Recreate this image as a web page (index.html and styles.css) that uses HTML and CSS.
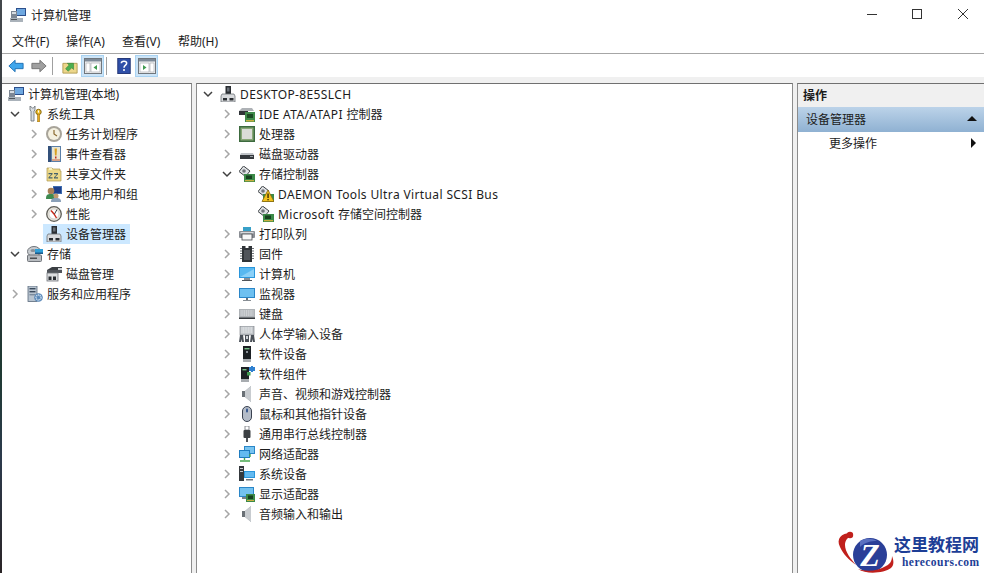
FILE: index.html
```html
<!DOCTYPE html>
<html lang="zh-CN">
<head>
    <meta charset="UTF-8">
    <meta name="viewport" content="width=device-width, initial-scale=1.0">
    <title>计算机管理</title>
    <link rel="stylesheet" href="styles.css">
</head>
<body>
    <svg class="sprite" xmlns="http://www.w3.org/2000/svg">
        <symbol id="chev-r" viewBox="0 0 10 10"><path d="M3 1l4 4-4 4" fill="none" stroke="#a6a6a6" stroke-width="1.5"/></symbol>
        <symbol id="chev-d" viewBox="0 0 10 10"><path d="M1 3l4 4 4-4" fill="none" stroke="#404040" stroke-width="1.5"/></symbol>

        <symbol id="mgmt" viewBox="0 0 16 16"><rect x="6" y="1" width="10" height="8" fill="#2c4f8c"/><rect x="7" y="2" width="8" height="6" fill="#6fa8e0"/><rect x="1" y="4" width="6" height="8" fill="#7d8794"/><rect x="2" y="5" width="4" height="2" fill="#d8dde2"/><rect x="0" y="11" width="13" height="4" fill="#aab2ba"/><rect x="1" y="12" width="6" height="1" fill="#50565c"/></symbol>
        <symbol id="tools" viewBox="0 0 16 16"><path d="M3 0v4l1 1v10h3V5l1-1V0L6.500 2h-1z" fill="#d8dde2" stroke="#666c72" stroke-width=".8"/><circle cx="11.500" cy="6" r="2.700" fill="#f0c030" stroke="#8a6a10"/><rect x="10.500" y="8" width="2.200" height="8" fill="#e8a820" stroke="#8a6a10" stroke-width=".5"/><rect x="11" y="4.500" width="1" height="2" fill="#fff"/></symbol>
        <symbol id="clock" viewBox="0 0 16 16"><circle cx="8" cy="8" r="8" fill="#a8a49a"/><circle cx="8" cy="8" r="6" fill="#f4f0e0"/><path d="M8 4v4l3 2" fill="none" stroke="#8a6a30" stroke-width="1.200"/></symbol>
        <symbol id="event" viewBox="0 0 16 16"><rect x="2" y="0" width="13" height="16" fill="#5a7fa8"/><rect x="2" y="0" width="3" height="16" fill="#33507a"/><rect x="6" y="1" width="8" height="14" fill="#e8e4d0"/><path d="M8.500 2.500h2.500l-.5 7H9z" fill="#d8a020"/><rect x="9" y="10.500" width="1.500" height="2" fill="#c03020"/><path d="M6 14h8" stroke="#c86040"/></symbol>
        <symbol id="share" viewBox="0 0 16 16"><path d="M1 2h5l1 1h7v2h1v10H1z" fill="#ecd888" stroke="#b09a50" stroke-width=".7"/><path d="M3 2h3v2H3z" fill="#f8f0c0"/><path d="M2.500 7h4v1.200l-3 3h3v1.300h-4v-1.200l3-3h-3zM8 7h4v1.200l-3 3h3v1.300H8v-1.200l3-3H8z" fill="#45606a"/></symbol>
        <symbol id="users" viewBox="0 0 16 16"><rect x="7" y="0" width="9" height="8" fill="#3d6cb0"/><rect x="8" y="1" width="7" height="6" fill="#1d3f8a"/><circle cx="5" cy="5" r="3.300" fill="#a88058"/><path d="M0 13c0-4 1-5 5-5s4 1 4 5z" fill="#3f8a50"/><circle cx="10" cy="10" r="2.500" fill="#c09a70"/><path d="M5 16c0-3 1-4 5-4s5 1 5 4z" fill="#8aa0b8"/></symbol>
        <symbol id="perf" viewBox="0 0 16 16"><circle cx="8" cy="8" r="7.300" fill="#e8e4dc" stroke="#5e5e58" stroke-width="1.300"/><circle cx="8" cy="8" r="5" fill="#fff" stroke="#c0c0b8" stroke-width=".6"/><path d="M5 4.500l3 3.500 2.500 4" stroke="#c82818" stroke-width="1.400" fill="none"/><path d="M11 3.500L8.500 8" stroke="#404040"/></symbol>
        <symbol id="dev" viewBox="0 0 16 16"><rect x="5.500" y="0" width="5.500" height="9" fill="#2a2e33"/><rect x="7" y="1.500" width="2.500" height="4" fill="#6a7078"/><path d="M2 8h12l1 2v6H1v-6z" fill="#d8dadd" stroke="#70747a" stroke-width=".8"/><rect x="3" y="12" width="4" height="2.500" fill="#2a2e33"/><rect x="9.500" y="12" width="4" height="2.500" fill="#2a2e33"/></symbol>
        <symbol id="storage" viewBox="0 0 16 16"><ellipse cx="7" cy="5.500" rx="6.500" ry="5" fill="#c8ccd0" stroke="#70747a"/><ellipse cx="6" cy="4.500" rx="2.500" ry="1.500" fill="#889098"/><rect x="8" y="3" width="8" height="4" fill="#2f9fd8"/><rect x="8" y="6.500" width="8" height="1.500" fill="#1a5a8a"/><rect x=".5" y="9" width="14" height="6.500" rx="1" fill="#b8bcc0" stroke="#70747a"/><rect x="3" y="11.500" width="7" height="1.500" fill="#4a4e52"/></symbol>
        <symbol id="disk" viewBox="0 0 16 16"><path d="M1 4l5-3h10v3z" fill="#3a3e42"/><rect x="1" y="4" width="15" height="3" fill="#50545a"/><rect x="12" y="2" width="4" height="2" fill="#d0d4d8"/><rect x="1" y="7" width="11" height="8" fill="#dcdee0" stroke="#70747a" stroke-width=".8"/><rect x="2.500" y="10.500" width="3" height="3.500" fill="#2a2e33"/><rect x="7" y="10.500" width="3" height="3.500" fill="#2a2e33"/></symbol>
        <symbol id="services" viewBox="0 0 16 16"><rect x="1" y="0" width="9" height="15.500" fill="#b8c4d0" stroke="#5a6a7c" stroke-width=".8"/><rect x="2.500" y="2" width="6" height="1.400" fill="#3a4a5c"/><rect x="2.500" y="5" width="6" height="1.400" fill="#3a4a5c"/><rect x="2.500" y="8" width="6" height="1.400" fill="#7a8a9c"/><circle cx="11.500" cy="11.500" r="4.300" fill="#5a88b8"/><circle cx="11.500" cy="11.500" r="2.500" fill="none" stroke="#cfe0f0" stroke-width="1.400" stroke-dasharray="1.200 .6"/></symbol>

        <symbol id="ide" viewBox="0 0 16 16"><path d="M0 5l3-3h10l2 3z" fill="#aeb2b6"/><rect x="0" y="5" width="9" height="4" fill="#303438"/><rect x="6" y="6" width="10" height="10" fill="#3f8a4a"/><rect x="8" y="8" width="6" height="4" fill="#1c4a24"/><rect x="7" y="14" width="8" height="1.500" fill="#c8b040"/></symbol>
        <symbol id="cpu" viewBox="0 0 16 16"><rect x="0" y="0" width="16" height="16" fill="#3c6a3e"/><rect x="1.500" y="1.500" width="13" height="13" fill="#8aa878"/><rect x="3" y="3" width="10" height="10" fill="#dcdcd8"/></symbol>
        <symbol id="hdd" viewBox="0 0 16 16"><path d="M1 9l1-2h12l1 2z" fill="#c0c4c8"/><rect x="1" y="9" width="14" height="4" fill="#34383c"/><rect x="11" y="10" width="3" height="1" fill="#9aa0a6"/></symbol>
        <symbol id="store" viewBox="0 0 16 16"><path d="M0 5.500L4.500 0 11 5l-4.500 5.500z" fill="#dfe2e5" stroke="#3e4246"/><circle cx="5" cy="5" r="1.800" fill="#70747a"/><rect x="5" y="8" width="11" height="8" fill="#3c8a48"/><rect x="7" y="9.500" width="6" height="3.500" fill="#17401f"/><rect x="6" y="14" width="9" height="1.300" fill="#c8b040"/></symbol>
        <symbol id="warn" viewBox="0 0 16 16"><path d="M10 4l6 11.500H4z" fill="#f2c21c" stroke="#8a6a10" stroke-width=".8"/><rect x="9.400" y="7.500" width="1.300" height="4.500" fill="#332400"/><rect x="9.400" y="13" width="1.300" height="1.300" fill="#332400"/></symbol>
        <symbol id="printer" viewBox="0 0 16 16"><rect x="4" y="1" width="8" height="4" fill="#37a0c8"/><rect x="0" y="5" width="16" height="7" rx="1" fill="#8a8e94"/><rect x="1.500" y="6" width="13" height="1.500" fill="#d8dadd"/><rect x="3" y="8" width="10" height="6" fill="#f8f8f8" stroke="#44484c" stroke-width=".8"/></symbol>
        <symbol id="chip" viewBox="0 0 16 16"><rect x="3" y="0" width="10" height="16" fill="#303438"/><path d="M6.500 0h3v2h-3z" fill="#fff"/><path d="M1 2.500h2M1 5h2M1 7.500h2M1 10h2M1 12.500h2M13 2.500h2M13 5h2M13 7.500h2M13 10h2M13 12.500h2" stroke="#70747a" stroke-width="1.200"/><rect x="5" y="4" width="6" height="10" fill="#50545a"/></symbol>
        <symbol id="pc" viewBox="0 0 16 16"><rect x="0" y="1" width="16" height="11" fill="#2a96dc"/><path d="M1 2h14v9H1z" fill="#58b8f0"/><path d="M1 11L15 3v8z" fill="#8ad0f8"/><rect x="5" y="12" width="6" height="2" fill="#8a9098"/><rect x="3" y="14" width="10" height="1" fill="#50555a"/></symbol>
        <symbol id="monitor" viewBox="0 0 16 16"><rect x="0" y="2" width="16" height="10" fill="#2a86c8"/><rect x="1" y="3" width="14" height="8" fill="#6ec0f0"/><rect x="7" y="12" width="2" height="2" fill="#6a7078"/><rect x="4" y="14" width="8" height="1" fill="#888e94"/></symbol>
        <symbol id="keyboard" viewBox="0 0 16 16"><rect x="0" y="3" width="16" height="10" fill="#aeb2b6"/><path d="M1.500 5h13M1.500 7h13M1.500 9h13" stroke="#eef0f2" stroke-dasharray="1.200 .6"/><rect x="0" y="11.500" width="16" height="1.500" fill="#34383c"/></symbol>
        <symbol id="hid" viewBox="0 0 16 16"><rect x="1" y="0" width="14" height="9" fill="#c4c8cc" stroke="#70747a" stroke-width=".6"/><path d="M2.500 2h11M2.500 4h11M2.500 6h11" stroke="#f0f2f4" stroke-dasharray="1 .6"/><path d="M0 16l1-7h3l1 7H3l-.5-3-.5 3zM6 16V9h4v7zM11 16l1-7h3l1 7h-2l-.5-3-.5 3z" fill="#4a5058"/><rect x="7" y="10" width="2" height="3" fill="#d0d4d8"/></symbol>
        <symbol id="softdev" viewBox="0 0 16 16"><rect x="4" y="0" width="8" height="13" fill="#1c2024"/><rect x="5.500" y="2" width="5" height="1.400" fill="#78c088"/><rect x="7" y="5" width="2" height="2" fill="#8a9098"/><rect x="4" y="13" width="8" height="3" fill="#a8acb0"/></symbol>
        <symbol id="softcomp" viewBox="0 0 16 16"><rect x="2" y="1" width="8" height="12" fill="#1c2024"/><rect x="3.500" y="3" width="4" height="1.400" fill="#78c088"/><rect x="2" y="13" width="8" height="3" fill="#a8acb0"/><path d="M10 1h2V0h2v1h2v4h-2v1h-2V5h-2z" fill="#2f80d0"/><rect x="8" y="6" width="3.500" height="3.500" fill="#3f9a50"/></symbol>
        <symbol id="speaker" viewBox="0 0 16 16"><path d="M3 5h3l6-5v16l-6-5H3z" fill="#9aa0a6"/><path d="M6 5l6-5v16l-6-5z" fill="#c8ccd0"/><rect x="3" y="5" width="3" height="6" fill="#6a7076"/></symbol>
        <symbol id="mouse" viewBox="0 0 16 16"><rect x="3.500" y="0.500" width="9" height="15" rx="4.500" fill="#b4bcc8" stroke="#3a4250"/><rect x="7" y="2.500" width="2" height="4" rx="1" fill="#3a5a90"/></symbol>
        <symbol id="usb" viewBox="0 0 16 16"><rect x="6" y="0" width="4" height="4" fill="#fff" stroke="#70747a" stroke-width=".8"/><rect x="4.500" y="4" width="7" height="8" rx="1" fill="#3c4044"/><rect x="7" y="12" width="2" height="4" fill="#50545a"/></symbol>
        <symbol id="network" viewBox="0 0 16 16"><rect x="5" y="0" width="11" height="8" fill="#2a86c8"/><rect x="6" y="1" width="9" height="6" fill="#78c4f0"/><rect x="0" y="4" width="11" height="8" fill="#1f7cc0"/><rect x="1" y="5" width="9" height="6" fill="#64baf0"/><path d="M5.500 12v2M1 15h10M11 8v3" stroke="#48a850" stroke-width="1.400"/></symbol>
        <symbol id="system" viewBox="0 0 16 16"><rect x="0" y="0" width="5" height="15" fill="#34383c"/><rect x="1" y="2" width="3" height="1" fill="#c8ccd0"/><rect x="1" y="5" width="3" height="1" fill="#c8ccd0"/><rect x="5" y="5" width="11" height="7" fill="#2a96dc"/><rect x="6" y="6" width="9" height="5" fill="#64baf0"/><rect x="7" y="13" width="7" height="1.500" fill="#70767c"/></symbol>
        <symbol id="display" viewBox="0 0 16 16"><rect x="0" y="1" width="15" height="10" fill="#2a86c8"/><rect x="1" y="2" width="13" height="8" fill="#74c2f0"/><rect x="3" y="11" width="4" height="2" fill="#7a8086"/><rect x="7" y="8" width="9" height="8" fill="#3c8a48"/><rect x="9" y="9.500" width="5" height="3.500" fill="#17401f"/><rect x="8" y="14" width="7" height="1" fill="#c8b040"/></symbol>
    </svg>

    <div class="window">
        <header class="titlebar">
            <svg class="ico"><use href="#mgmt"/></svg>
            <span class="title">计算机管理</span>
            <div class="winbtns">
                <svg class="winbtn" viewBox="0 0 46 31"><path d="M21 14.500h10" stroke="#333"/></svg>
                <svg class="winbtn" viewBox="0 0 46 31"><rect x="20.500" y="9.500" width="9" height="9" fill="none" stroke="#333"/></svg>
                <svg class="winbtn" viewBox="0 0 46 31"><path d="M20 9l10 10M30 9L20 19" stroke="#333" fill="none"/></svg>
            </div>
        </header>

        <nav class="menubar">
            <span class="menu">文件(F)</span>
            <span class="menu">操作(A)</span>
            <span class="menu">查看(V)</span>
            <span class="menu">帮助(H)</span>
        </nav>

        <div class="toolbar">
            <span class="tool"><svg viewBox="0 0 18 14"><path d="M8 0.500v3.500h9v6H8v3.500L1 7z" fill="#3fa6ec" stroke="#1c6cb0"/></svg></span>
            <span class="tool"><svg viewBox="0 0 18 14"><path d="M10 0.500v3.500H1v6h9v3.500L17 7z" fill="#a0a0a0" stroke="#707070"/></svg></span>
            <i class="sep"></i>
            <span class="tool"><svg viewBox="0 0 18 18"><path d="M1 6h16v11H1z" fill="#ecd68a" stroke="#b09a50"/><path d="M4 12l4-4-2-2h7v7l-2-2-4 4z" fill="#4caf50" stroke="#2e7d32" stroke-width=".6"/></svg></span>
            <span class="tool on"><svg viewBox="0 0 18 18"><rect x=".5" y="1.500" width="17" height="15" fill="#f4f4f4" stroke="#70767c"/><rect x="1" y="2" width="16" height="2.500" fill="#7d8a98"/><rect x="2" y="6" width="4" height="9" fill="#fff" stroke="#a0a6ac" stroke-width=".6"/><rect x="7" y="6" width="9" height="9" fill="#fff" stroke="#a0a6ac" stroke-width=".6"/><path d="M13 8v5l-3.500-2.500z" fill="#3f9a50"/></svg></span>
            <i class="sep"></i>
            <span class="tool"><svg viewBox="0 0 18 18"><rect x="2" y="0.500" width="14" height="17" fill="#2f4fa8" stroke="#1c2f70"/><path d="M6 6c0-3 6-3 6 0 0 2-3 2-3 5M9 12.500v2" fill="none" stroke="#fff" stroke-width="1.700"/></svg></span>
            <span class="tool on"><svg viewBox="0 0 18 18"><rect x=".5" y="1.500" width="17" height="15" fill="#f4f4f4" stroke="#70767c"/><rect x="1" y="2" width="16" height="2.500" fill="#7d8a98"/><rect x="2" y="6" width="9" height="9" fill="#fff" stroke="#a0a6ac" stroke-width=".6"/><rect x="12" y="6" width="4" height="9" fill="#fff" stroke="#a0a6ac" stroke-width=".6"/><path d="M5 8v5l3.500-2.500z" fill="#3f9a50"/></svg></span>
        </div>

        <main class="panes">
            <section class="pane nav-pane">
                <div class="row d0"><span class="item"><svg class="ico"><use href="#mgmt"/></svg>计算机管理(本地)</span></div>
                <div class="row d1"><svg class="chev"><use href="#chev-d"/></svg><span class="item"><svg class="ico"><use href="#tools"/></svg>系统工具</span></div>
                <div class="row d2"><svg class="chev"><use href="#chev-r"/></svg><span class="item"><svg class="ico"><use href="#clock"/></svg>任务计划程序</span></div>
                <div class="row d2"><svg class="chev"><use href="#chev-r"/></svg><span class="item"><svg class="ico"><use href="#event"/></svg>事件查看器</span></div>
                <div class="row d2"><svg class="chev"><use href="#chev-r"/></svg><span class="item"><svg class="ico"><use href="#share"/></svg>共享文件夹</span></div>
                <div class="row d2"><svg class="chev"><use href="#chev-r"/></svg><span class="item"><svg class="ico"><use href="#users"/></svg>本地用户和组</span></div>
                <div class="row d2"><svg class="chev"><use href="#chev-r"/></svg><span class="item"><svg class="ico"><use href="#perf"/></svg>性能</span></div>
                <div class="row d2"><span class="chev"></span><span class="item selected"><svg class="ico"><use href="#dev"/></svg>设备管理器</span></div>
                <div class="row d1"><svg class="chev"><use href="#chev-d"/></svg><span class="item"><svg class="ico"><use href="#storage"/></svg>存储</span></div>
                <div class="row d2"><span class="chev"></span><span class="item"><svg class="ico"><use href="#disk"/></svg>磁盘管理</span></div>
                <div class="row d1"><svg class="chev"><use href="#chev-r"/></svg><span class="item"><svg class="ico"><use href="#services"/></svg>服务和应用程序</span></div>
            </section>

            <section class="pane dev-pane">
                <div class="row d1"><svg class="chev"><use href="#chev-d"/></svg><span class="item"><svg class="ico"><use href="#dev"/></svg><span class="latin">DESKTOP-8E5SLCH</span></span></div>
                <div class="row d2"><svg class="chev"><use href="#chev-r"/></svg><span class="item"><svg class="ico"><use href="#ide"/></svg><span class="latin">IDE ATA/ATAPI&nbsp;</span>控制器</span></div>
                <div class="row d2"><svg class="chev"><use href="#chev-r"/></svg><span class="item"><svg class="ico"><use href="#cpu"/></svg>处理器</span></div>
                <div class="row d2"><svg class="chev"><use href="#chev-r"/></svg><span class="item"><svg class="ico"><use href="#hdd"/></svg>磁盘驱动器</span></div>
                <div class="row d2"><svg class="chev"><use href="#chev-d"/></svg><span class="item"><svg class="ico"><use href="#store"/></svg>存储控制器</span></div>
                <div class="row d3"><span class="chev"></span><span class="item"><svg class="ico"><use href="#store"/><use href="#warn"/></svg><span class="latin">DAEMON Tools Ultra Virtual SCSI Bus</span></span></div>
                <div class="row d3"><span class="chev"></span><span class="item"><svg class="ico"><use href="#store"/></svg><span class="latin">Microsoft&nbsp;</span>存储空间控制器</span></div>
                <div class="row d2"><svg class="chev"><use href="#chev-r"/></svg><span class="item"><svg class="ico"><use href="#printer"/></svg>打印队列</span></div>
                <div class="row d2"><svg class="chev"><use href="#chev-r"/></svg><span class="item"><svg class="ico"><use href="#chip"/></svg>固件</span></div>
                <div class="row d2"><svg class="chev"><use href="#chev-r"/></svg><span class="item"><svg class="ico"><use href="#pc"/></svg>计算机</span></div>
                <div class="row d2"><svg class="chev"><use href="#chev-r"/></svg><span class="item"><svg class="ico"><use href="#monitor"/></svg>监视器</span></div>
                <div class="row d2"><svg class="chev"><use href="#chev-r"/></svg><span class="item"><svg class="ico"><use href="#keyboard"/></svg>键盘</span></div>
                <div class="row d2"><svg class="chev"><use href="#chev-r"/></svg><span class="item"><svg class="ico"><use href="#hid"/></svg>人体学输入设备</span></div>
                <div class="row d2"><svg class="chev"><use href="#chev-r"/></svg><span class="item"><svg class="ico"><use href="#softdev"/></svg>软件设备</span></div>
                <div class="row d2"><svg class="chev"><use href="#chev-r"/></svg><span class="item"><svg class="ico"><use href="#softcomp"/></svg>软件组件</span></div>
                <div class="row d2"><svg class="chev"><use href="#chev-r"/></svg><span class="item"><svg class="ico"><use href="#speaker"/></svg>声音、视频和游戏控制器</span></div>
                <div class="row d2"><svg class="chev"><use href="#chev-r"/></svg><span class="item"><svg class="ico"><use href="#mouse"/></svg>鼠标和其他指针设备</span></div>
                <div class="row d2"><svg class="chev"><use href="#chev-r"/></svg><span class="item"><svg class="ico"><use href="#usb"/></svg>通用串行总线控制器</span></div>
                <div class="row d2"><svg class="chev"><use href="#chev-r"/></svg><span class="item"><svg class="ico"><use href="#network"/></svg>网络适配器</span></div>
                <div class="row d2"><svg class="chev"><use href="#chev-r"/></svg><span class="item"><svg class="ico"><use href="#system"/></svg>系统设备</span></div>
                <div class="row d2"><svg class="chev"><use href="#chev-r"/></svg><span class="item"><svg class="ico"><use href="#display"/></svg>显示适配器</span></div>
                <div class="row d2"><svg class="chev"><use href="#chev-r"/></svg><span class="item"><svg class="ico"><use href="#speaker"/></svg>音频输入和输出</span></div>
            </section>

            <aside class="pane action-pane">
                <div class="action-head">操作</div>
                <div class="action-group"><span>设备管理器</span><i class="arrow-up"></i></div>
                <div class="action-item"><span>更多操作</span><i class="arrow-right"></i></div>
            </aside>
        </main>
    </div>

    <div class="watermark">
        <svg class="wm-logo" viewBox="0 0 60 45">
            <path d="M15 5C5 5 0 11 4 19c3 7 9 13 16 18-5-6-11-13-11-20 0-5 3-8 7-9z" fill="#c0201c"/>
            <circle cx="14" cy="7" r="3.200" fill="#c0201c"/>
            <circle cx="34" cy="27" r="17" fill="#2a3f98"/>
            <path d="M24 13c5-3 12-3 17 0-6 0-12 1-17 6z" fill="#5a70c0"/>
            <path d="M22 41c9 6 26 4 33-1 3-3 3-7 1-12 0 5-2 8-6 10-8 5-19 6-28 3z" fill="#c0201c"/>
            <text x="34" y="38" class="wm-z">Z</text>
        </svg>
        <div class="wm-text">
            <div class="wm-cn">这里教程网</div>
            <div class="wm-en">herecours.com</div>
        </div>
    </div>
</body>
</html>
```

FILE: styles.css
```css
* {
    box-sizing: border-box;
}
html, body {
    margin: 0;
    height: 100%;
    overflow: hidden;
}
body {
    font-family: "Noto Sans", "Noto Sans CJK SC", sans-serif;
    font-size: 12px;
    color: #1c1c1c;
    background-color: #fff;
    position: relative;
}
.sprite {
    position: absolute;
    width: 0;
    height: 0;
}
.window {
    height: 573px;
    display: flex;
    flex-direction: column;
    border-left: 2px solid #27383a;
    border-image: linear-gradient(#44484c, #2a3036 40%, #1f3a33 65%, #2c3a4c 80%, #2a2426) 1;
}
.latin {
    letter-spacing: .37px;
    white-space: pre;
}

/* barra de titulo */
.titlebar {
    height: 31px;
    display: flex;
    align-items: center;
    padding-left: 8px;
    flex: none;
}
.titlebar .ico {
    margin-bottom: 2px;
}
.title {
    margin-left: 1px;
    padding-bottom: 2px;
}
.winbtns {
    margin-left: auto;
    display: flex;
}
.winbtn {
    width: 46px;
    height: 31px;
}

.menubar {
    height: 23px;
    flex: none;
    display: flex;
    align-items: center;
    padding: 0 0 3px 10px;
    border-bottom: 1px solid #a6a6a6;
}
.menu {
    width: 56px;
}
.menu:first-child {
    width: 54px;
}
.toolbar {
    height: 23px;
    flex: none;
    display: flex;
    align-items: center;
    padding-left: 2px;
}
.tool {
    width: 23px;
    height: 22px;
    display: flex;
    align-items: center;
    justify-content: center;
}
.tool svg {
    width: 16px;
    height: 16px;
}
.tool.on svg {
    width: 18px;
    height: 18px;
}
.tool.on {
    background-color: #cce4f7;
    border: 1px solid #a9d3f2;
}
.sep {
    width: 1px;
    height: 18px;
    margin: 0 5px 0 2px;
    background-color: #a0a0a0;
}

.panes {
    flex: 1;
    display: flex;
    gap: 4px;
    padding-top: 6px;
    background-color: #f0f0f0;
    min-height: 0;
}
.pane {
    background-color: #fff;
    border-top: 1px solid #707070;
    border-left: 1px solid #8c8c8c;
}
.nav-pane {
    width: 190px;
    border-left: none;
    border-right: 1px solid #8c8c8c;
}
.dev-pane {
    width: 597px;
    border-right: 1px solid #8c8c8c;
}
.action-pane {
    flex: 1;
}

/* arbol */
.row {
    height: 20px;
    display: flex;
    align-items: center;
    white-space: nowrap;
}
.d0 { padding-left: 3px; }
.d1 { padding-left: 6px; }
.d2 { padding-left: 25px; }
.d3 { padding-left: 44px; }
.dev-pane .d1 { padding-left: 4px; }
.dev-pane .d2 { padding-left: 23px; }
.dev-pane .d3 { padding-left: 42px; }
.chev {
    width: 16px;
    height: 10px;
    flex: none;
    margin: 0 1px 0 -1px;
}
.item {
    height: 20px;
    display: flex;
    align-items: center;
    padding: 0 3px;
}
.item.selected {
    background-color: #cce8ff;
    padding-right: 4px;
}
.ico {
    width: 16px;
    height: 16px;
    flex: none;
    margin-right: 4px;
}

/* panel de acciones */
.action-head {
    height: 23px;
    line-height: 23px;
    padding-left: 5px;
    background-color: #f0f0f0;
    font-weight: 700;
}
.action-group {
    height: 25px;
    display: flex;
    align-items: center;
    justify-content: space-between;
    padding: 0 7px 2px 8px;
    background: linear-gradient(#bcd3e9, #8fb1d2);
}
.action-item {
    height: 24px;
    display: flex;
    align-items: center;
    justify-content: space-between;
    padding: 0 8px 2px 31px;
}
.arrow-up {
    border-left: 5px solid transparent;
    border-right: 5px solid transparent;
    border-bottom: 5px solid #111;
}
.arrow-right {
    border-top: 5px solid transparent;
    border-bottom: 5px solid transparent;
    border-left: 5px solid #111;
}

/* marca de agua */
.watermark {
    position: absolute;
    right: 0;
    bottom: 0;
    width: 148px;
    height: 45px;
    display: flex;
    background-color: #fff;
}
.wm-logo {
    width: 60px;
    height: 45px;
    flex: none;
}
.wm-z {
    font-family: "Liberation Serif", serif;
    font-weight: 700;
    font-style: italic;
    font-size: 32px;
    fill: #fff;
    text-anchor: middle;
}
.wm-text {
    margin-left: -2px;
    padding-top: 3px;
    color: #1d3e96;
    font-weight: 700;
    white-space: nowrap;
}
.wm-cn {
    font-family: "Noto Sans CJK SC", sans-serif;
    font-size: 17px;
    line-height: 25px;
}
.wm-en {
    font-family: "Liberation Serif", serif;
    font-size: 11.5px;
    line-height: 13px;
    padding-left: 8px;
    letter-spacing: .45px;
}
```
